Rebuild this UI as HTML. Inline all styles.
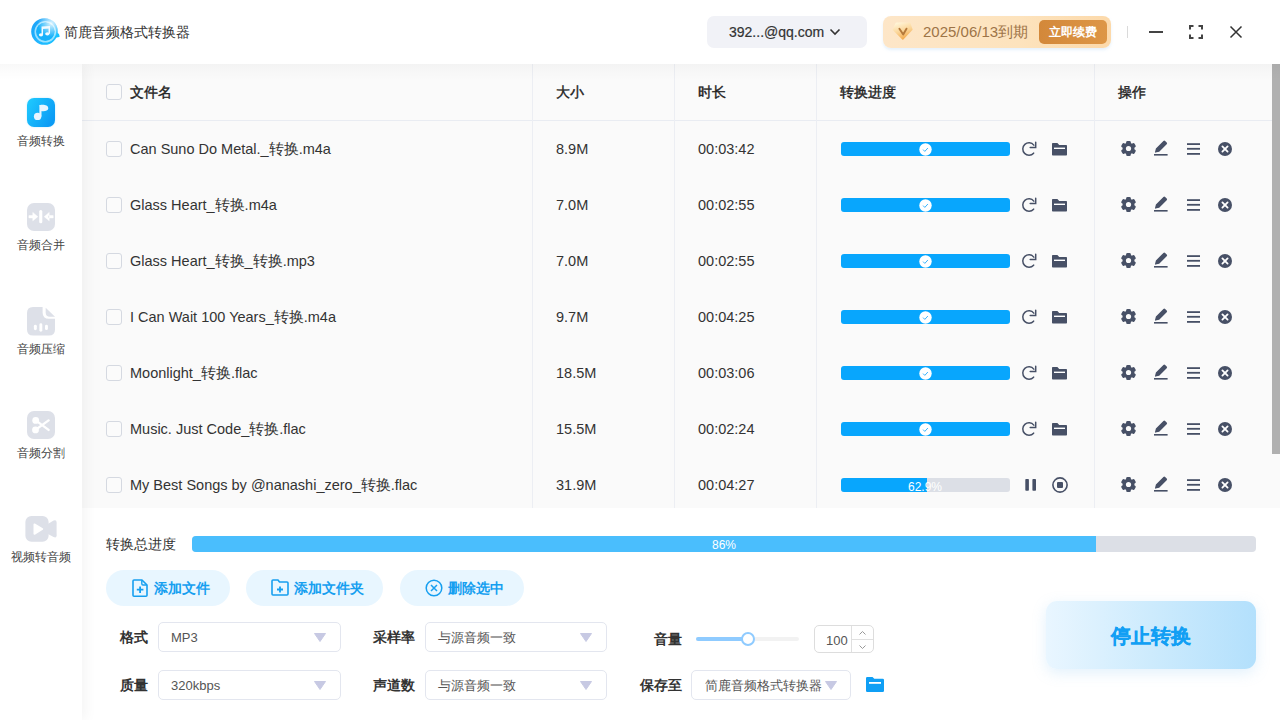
<!DOCTYPE html>
<html><head><meta charset="utf-8">
<style>
*{box-sizing:border-box;margin:0;padding:0}
html,body{width:1280px;height:720px;overflow:hidden;background:#fff}
body{position:relative;font-family:"Liberation Sans",sans-serif;color:#333;font-size:14px}
.a{position:absolute}
.t{position:absolute;white-space:nowrap;line-height:20px}
#header{left:0;top:0;width:1280px;height:64px;background:#fff;z-index:3}
#side{left:0;top:64px;width:82px;height:656px;background:#fff;z-index:2;box-shadow:4px 0 12px rgba(0,0,0,0.045)}
#table{left:82px;top:64px;width:1198px;height:444px;background:#fafafa;overflow:hidden}
#topshade{left:0;top:64px;width:1280px;height:16px;background:linear-gradient(rgba(0,0,0,0.028),rgba(0,0,0,0.01) 50%,rgba(0,0,0,0));z-index:4}
.cb{position:absolute;width:16px;height:16px;border:1px solid #d5d9e1;border-radius:3px;background:#fbfbfb}
.vl{position:absolute;top:0;width:1px;height:444px;background:#eceef3}
.th{color:#222;-webkit-text-stroke:0.4px #222}
.bar{position:absolute;left:759px;width:169px;height:14px;border-radius:3px;background:#08a6fd}
.ops svg{position:absolute}
</style></head><body>

<!-- HEADER -->
<div id="header" class="a">
  <svg class="a" style="left:28px;top:14px" width="36" height="36" viewBox="0 0 36 36">
    <defs><linearGradient id="lg1" x1="0" y1="0" x2="1" y2="1"><stop offset="0" stop-color="#1b9ff7"/><stop offset="0.55" stop-color="#22b5ff"/><stop offset="1" stop-color="#17c4ff"/></linearGradient>
    <radialGradient id="lg2" cx="0.75" cy="0.2" r="0.5"><stop offset="0" stop-color="#fff" stop-opacity="0.85"/><stop offset="1" stop-color="#fff" stop-opacity="0"/></radialGradient>
    <filter id="bl1"><feGaussianBlur stdDeviation="0.5"/></filter></defs>
    <g filter="url(#bl1)">
    <circle cx="16.5" cy="17.5" r="13.3" fill="url(#lg1)"/>
    <path d="M27 17.5c2.5 0.5 4.5 2.5 4.7 5.2-1.5 0.8-3.5 1-5.5 0.5z" fill="#12c0ff"/>
    <circle cx="17.3" cy="17.8" r="10" fill="none" stroke="#b8ecff" stroke-width="1.6" opacity="0.8"/>
    <circle cx="17.5" cy="17.5" r="9" fill="#15b1fb"/>
    <circle cx="16.5" cy="17.5" r="13.5" fill="url(#lg2)"/>
    </g>
    <ellipse cx="13" cy="20.8" rx="2.1" ry="1.6" fill="#f2faff"/>
    <ellipse cx="19.3" cy="19.8" rx="2.1" ry="1.6" fill="#f2faff"/>
    <path d="M14.3 20.8V13.3L21.3 12.7V19.8" fill="none" stroke="#f2faff" stroke-width="1.5"/>
    <path d="M14.3 13.3L21.3 12.7V14.4L14.3 15z" fill="#f2faff"/>
  </svg>
  <div class="t" style="left:64px;top:22px;font-size:14px;color:#333">简鹿音频格式转换器</div>

  <div class="a" style="left:707px;top:16px;width:160px;height:32px;border-radius:7px;background:#f1f2f7"></div>
  <div class="t" style="left:729px;top:22px;font-size:14px;color:#333;-webkit-text-stroke:0.2px #333">392...@qq.com</div>
  <svg class="a" style="left:829px;top:27px" width="12" height="10" viewBox="0 0 12 10"><path d="M1.5 2.5L6 7l4.5-4.5" fill="none" stroke="#333" stroke-width="1.6"/></svg>

  <div class="a" style="left:883px;top:16px;width:228px;height:32px;border-radius:8px;background:linear-gradient(90deg,#fde6c8,#fde3bd 60%,#fcd9aa);box-shadow:0 2px 3px rgba(180,215,245,0.35)"></div>
  <svg class="a" style="left:892px;top:22px" width="22" height="19" viewBox="0 0 22 19">
    <defs><linearGradient id="dg" x1="0.2" y1="0" x2="0.6" y2="1"><stop offset="0" stop-color="#fff4d6"/><stop offset="0.5" stop-color="#fbd69a"/><stop offset="1" stop-color="#f3ab4f"/></linearGradient>
    <filter id="bl2"><feGaussianBlur stdDeviation="0.35"/></filter></defs>
    <path d="M4.3 1.4H17.7L19.8 7.5 10.8 16.9 1.4 7.5z" fill="url(#dg)" stroke="url(#dg)" stroke-width="1.6" stroke-linejoin="round" filter="url(#bl2)"/>
    <path d="M7.4 6.7l3.8 5.8 3.3-5.8" fill="none" stroke="#b57a3c" stroke-width="1.9" stroke-linecap="round" stroke-linejoin="round"/>
  </svg>
  <div class="t" style="left:923px;top:22px;font-size:15px;color:#9d7447">2025/06/13到期</div>
  <div class="a" style="left:1039px;top:20px;width:68px;height:24px;border-radius:5px;background:linear-gradient(90deg,#d3883a,#dd9646)"></div>
  <div class="t" style="left:1049px;top:22px;font-size:12px;font-weight:bold;color:#fff">立即续费</div>

  <div class="a" style="left:1127px;top:26px;width:1px;height:12px;background:#dadada"></div>
  <div class="a" style="left:1149px;top:31px;width:14px;height:2px;background:#444"></div>
  <svg class="a" style="left:1189px;top:25px" width="14" height="14" viewBox="0 0 14 14" fill="none" stroke="#444" stroke-width="2">
    <path d="M1 4.5V1h3.5M9.5 1H13v3.5M13 9.5V13H9.5M4.5 13H1V9.5"/>
  </svg>
  <svg class="a" style="left:1229px;top:25px" width="14" height="14" viewBox="0 0 14 14" fill="none" stroke="#333" stroke-width="1.5">
    <path d="M1.5 1.5l11 11M12.5 1.5l-11 11"/>
  </svg>
</div>
<div id="topshade" class="a"></div>

<!-- SIDEBAR -->
<div id="side" class="a">
  <svg class="a" style="left:25px;top:32px" width="32" height="33" viewBox="-2 -2 32 33">
    <defs><linearGradient id="ag" x1="0" y1="0" x2="1" y2="0.6"><stop offset="0" stop-color="#20ccff"/><stop offset="1" stop-color="#0b9bf5"/></linearGradient>
    <filter id="glow" x="-20%" y="-20%" width="140%" height="140%"><feGaussianBlur stdDeviation="0.8"/></filter></defs>
    <rect x="0" y="0" width="28" height="29" rx="7.5" fill="#8fdcff" opacity="0.5" filter="url(#glow)"/>
    <rect x="0" y="0" width="28" height="29" rx="7" fill="url(#ag)"/>
    <circle cx="10.6" cy="18.4" r="3.7" fill="#e8f5ff"/>
    <rect x="12.4" y="7" width="2.1" height="11.5" fill="#e8f5ff"/>
    <path d="M12.6 7.2C16 6.2 21.2 6.8 21.2 10.2 21.2 13 17.2 13.6 14 13z" fill="#e8f5ff"/>
  </svg>
  <div class="t" style="left:17px;top:67px;width:48px;font-size:12px;color:#444;text-align:center">音频转换</div>

  <svg class="a" style="left:27px;top:139px" width="28" height="28" viewBox="0 0 28 28">
    <rect width="28" height="28" rx="7" fill="#dde0e8"/>
    <rect x="12.2" y="7" width="3.1" height="13.2" rx="1.5" fill="#fff"/>
    <path d="M1.9 12.6h5v2.3h-5z M5.8 9.4l5 4.3-5 4.1z M21 12.6h5.2v2.3H21z M22.2 9.4l-5 4.3 5 4.1z" fill="#fff" stroke="#fff" stroke-width="0.5" stroke-linejoin="round"/>
  </svg>
  <div class="t" style="left:17px;top:171px;width:48px;font-size:12px;color:#444;text-align:center">音频合并</div>

  <svg class="a" style="left:27px;top:243px" width="28" height="29" viewBox="0 0 28 29">
    <path d="M6 0H15.6V5.5Q15.6 11.8 22 11.8H28V22.5Q28 28.5 22 28.5H6Q0 28.5 0 22.5V6Q0 0 6 0Z" fill="#dde0e8"/>
    <path d="M18.7 0.8L28 9.8H23Q18.7 9.8 18.7 5.5Z" fill="#dde0e8"/>
    <rect x="6.9" y="17.8" width="2.9" height="5.5" rx="1.45" fill="#fff"/>
    <rect x="12.4" y="16.2" width="2.9" height="8.5" rx="1.45" fill="#fff"/>
    <rect x="18" y="17.8" width="2.9" height="5.3" rx="1.45" fill="#fff"/>
  </svg>
  <div class="t" style="left:17px;top:275px;width:48px;font-size:12px;color:#444;text-align:center">音频压缩</div>

  <svg class="a" style="left:27px;top:347px" width="28" height="28" viewBox="0 0 28 28">
    <rect width="28" height="28" rx="7" fill="#dde0e8"/>
    <path d="M8.7 9.4L21.6 18.9M8.5 18.9L21.6 9.4" stroke="#fff" stroke-width="2.4" stroke-linecap="round"/>
    <circle cx="8.7" cy="9.4" r="3.4" fill="#fff"/><circle cx="8.5" cy="18.9" r="3.4" fill="#fff"/>
  </svg>
  <div class="t" style="left:17px;top:379px;width:48px;font-size:12px;color:#444;text-align:center">音频分割</div>

  <svg class="a" style="left:25px;top:451px" width="32" height="28" viewBox="0 0 32 28">
    <rect x="0.4" y="0.9" width="23.2" height="25.9" rx="6" fill="#dde0e8"/>
    <path d="M22 9.5L28.6 5.6Q31.6 4.4 31.6 7.5V20.2Q31.6 23.3 28.6 22L22 18.5z" fill="#dde0e8"/>
    <path d="M9.4 9.3L17.3 14.1 9.4 18.9z" fill="#fff" stroke="#fff" stroke-width="1.8" stroke-linejoin="round"/>
  </svg>
  <div class="t" style="left:8px;top:483px;width:66px;font-size:12px;color:#444;text-align:center">视频转音频</div>
</div>

<!-- TABLE -->
<div id="table" class="a">
<div class="a" style="left:0;top:56px;width:1190px;height:1px;background:#e9ecf2"></div>
<div class="vl" style="left:450px"></div>
<div class="vl" style="left:592px"></div>
<div class="vl" style="left:734px"></div>
<div class="vl" style="left:1012px"></div>
<div class="cb" style="left:24px;top:20px"></div>
<div class="t th" style="left:48px;top:18px">文件名</div>
<div class="t th" style="left:474px;top:18px">大小</div>
<div class="t th" style="left:616px;top:18px">时长</div>
<div class="t th" style="left:758px;top:18px">转换进度</div>
<div class="t th" style="left:1036px;top:18px">操作</div>
<div class="cb" style="left:24px;top:77px"></div>
<div class="t" style="left:48px;top:75px;font-size:14.5px">Can Suno Do Metal._转换.m4a</div>
<div class="t" style="left:474px;top:75px;font-size:14.5px">8.9M</div>
<div class="t" style="left:616px;top:75px;font-size:14.5px">00:03:42</div>
<div class="bar" style="top:78px"></div>
<svg class="a" style="left:837px;top:79px" width="13" height="13" viewBox="0 0 13 13"><circle cx="6.5" cy="6.5" r="6.2" fill="#fff"/><path d="M4.1 6.6l1.7 1.8 3.1-3.4" fill="none" stroke="#3cb4fd" stroke-width="1"/></svg>
<svg class="a" style="left:939px;top:77px" width="17" height="16" viewBox="0 0 17 16"><path d="M12.82 4.1A6.2 6.2 0 1 0 12.6 12.15" fill="none" stroke="#475066" stroke-width="1.5" stroke-linecap="round"/><path d="M14.7 1.2V6.4H9.2" fill="none" stroke="#475066" stroke-width="1.5" stroke-linecap="round"/></svg>
<svg class="a" style="left:970px;top:79px" width="15" height="13" viewBox="0 0 15 13"><path d="M0 0.8A0.8 0.8 0 0 1 0.8 0H5.4L7.2 2H14.2A0.8 0.8 0 0 1 15 2.8V11.7A0.8 0.8 0 0 1 14.2 12.5H0.8A0.8 0.8 0 0 1 0 11.7z" fill="#475066"/><rect x="2" y="4.6" width="11" height="1.4" fill="#fff"/></svg>
<svg class="a" style="left:1038px;top:76px" width="17" height="17" viewBox="0 0 17 17"><g transform="translate(8.5 8.5)"><g fill="#475066"><rect x="-2.3" y="-7.6" width="4.6" height="15.2" rx="1.3"/><rect x="-2.3" y="-7.6" width="4.6" height="15.2" rx="1.3" transform="rotate(60)"/><rect x="-2.3" y="-7.6" width="4.6" height="15.2" rx="1.3" transform="rotate(120)"/><circle r="5.9"/></g><circle r="2.6" fill="#fafafa"/></g></svg>
<svg class="a" style="left:1071px;top:76px" width="15" height="16" viewBox="0 0 15 16"><path fill="#475066" d="M10.4 0.9a1.2 1.2 0 0 1 1.7 0l1.6 1.6a1.2 1.2 0 0 1 0 1.7L6.2 11.7 2.6 12.6a0.5 0.5 0 0 1-0.6-0.6L2.9 8.4z"/><rect x="1" y="14" width="13.6" height="1.6" fill="#475066"/></svg>
<svg class="a" style="left:1105px;top:78px" width="13" height="13" viewBox="0 0 13 13"><rect x="0" y="1.2" width="13" height="1.8" fill="#475066"/><rect x="0" y="5.9" width="13" height="1.8" fill="#475066"/><rect x="0" y="11" width="13" height="1.8" fill="#475066"/></svg>
<svg class="a" style="left:1136px;top:78px" width="14" height="14" viewBox="0 0 14 14"><circle cx="7" cy="7" r="7" fill="#475066"/><path d="M4.4 4.4L9.6 9.6" stroke="#fff" stroke-width="1.8" stroke-linecap="round" fill="none"/><path d="M9.6 4.4L4.4 9.6" stroke="#fff" stroke-width="1.8" stroke-linecap="round" fill="none"/></svg>
<div class="cb" style="left:24px;top:133px"></div>
<div class="t" style="left:48px;top:131px;font-size:14.5px">Glass Heart_转换.m4a</div>
<div class="t" style="left:474px;top:131px;font-size:14.5px">7.0M</div>
<div class="t" style="left:616px;top:131px;font-size:14.5px">00:02:55</div>
<div class="bar" style="top:134px"></div>
<svg class="a" style="left:837px;top:135px" width="13" height="13" viewBox="0 0 13 13"><circle cx="6.5" cy="6.5" r="6.2" fill="#fff"/><path d="M4.1 6.6l1.7 1.8 3.1-3.4" fill="none" stroke="#3cb4fd" stroke-width="1"/></svg>
<svg class="a" style="left:939px;top:133px" width="17" height="16" viewBox="0 0 17 16"><path d="M12.82 4.1A6.2 6.2 0 1 0 12.6 12.15" fill="none" stroke="#475066" stroke-width="1.5" stroke-linecap="round"/><path d="M14.7 1.2V6.4H9.2" fill="none" stroke="#475066" stroke-width="1.5" stroke-linecap="round"/></svg>
<svg class="a" style="left:970px;top:135px" width="15" height="13" viewBox="0 0 15 13"><path d="M0 0.8A0.8 0.8 0 0 1 0.8 0H5.4L7.2 2H14.2A0.8 0.8 0 0 1 15 2.8V11.7A0.8 0.8 0 0 1 14.2 12.5H0.8A0.8 0.8 0 0 1 0 11.7z" fill="#475066"/><rect x="2" y="4.6" width="11" height="1.4" fill="#fff"/></svg>
<svg class="a" style="left:1038px;top:132px" width="17" height="17" viewBox="0 0 17 17"><g transform="translate(8.5 8.5)"><g fill="#475066"><rect x="-2.3" y="-7.6" width="4.6" height="15.2" rx="1.3"/><rect x="-2.3" y="-7.6" width="4.6" height="15.2" rx="1.3" transform="rotate(60)"/><rect x="-2.3" y="-7.6" width="4.6" height="15.2" rx="1.3" transform="rotate(120)"/><circle r="5.9"/></g><circle r="2.6" fill="#fafafa"/></g></svg>
<svg class="a" style="left:1071px;top:132px" width="15" height="16" viewBox="0 0 15 16"><path fill="#475066" d="M10.4 0.9a1.2 1.2 0 0 1 1.7 0l1.6 1.6a1.2 1.2 0 0 1 0 1.7L6.2 11.7 2.6 12.6a0.5 0.5 0 0 1-0.6-0.6L2.9 8.4z"/><rect x="1" y="14" width="13.6" height="1.6" fill="#475066"/></svg>
<svg class="a" style="left:1105px;top:134px" width="13" height="13" viewBox="0 0 13 13"><rect x="0" y="1.2" width="13" height="1.8" fill="#475066"/><rect x="0" y="5.9" width="13" height="1.8" fill="#475066"/><rect x="0" y="11" width="13" height="1.8" fill="#475066"/></svg>
<svg class="a" style="left:1136px;top:134px" width="14" height="14" viewBox="0 0 14 14"><circle cx="7" cy="7" r="7" fill="#475066"/><path d="M4.4 4.4L9.6 9.6" stroke="#fff" stroke-width="1.8" stroke-linecap="round" fill="none"/><path d="M9.6 4.4L4.4 9.6" stroke="#fff" stroke-width="1.8" stroke-linecap="round" fill="none"/></svg>
<div class="cb" style="left:24px;top:189px"></div>
<div class="t" style="left:48px;top:187px;font-size:14.5px">Glass Heart_转换_转换.mp3</div>
<div class="t" style="left:474px;top:187px;font-size:14.5px">7.0M</div>
<div class="t" style="left:616px;top:187px;font-size:14.5px">00:02:55</div>
<div class="bar" style="top:190px"></div>
<svg class="a" style="left:837px;top:191px" width="13" height="13" viewBox="0 0 13 13"><circle cx="6.5" cy="6.5" r="6.2" fill="#fff"/><path d="M4.1 6.6l1.7 1.8 3.1-3.4" fill="none" stroke="#3cb4fd" stroke-width="1"/></svg>
<svg class="a" style="left:939px;top:189px" width="17" height="16" viewBox="0 0 17 16"><path d="M12.82 4.1A6.2 6.2 0 1 0 12.6 12.15" fill="none" stroke="#475066" stroke-width="1.5" stroke-linecap="round"/><path d="M14.7 1.2V6.4H9.2" fill="none" stroke="#475066" stroke-width="1.5" stroke-linecap="round"/></svg>
<svg class="a" style="left:970px;top:191px" width="15" height="13" viewBox="0 0 15 13"><path d="M0 0.8A0.8 0.8 0 0 1 0.8 0H5.4L7.2 2H14.2A0.8 0.8 0 0 1 15 2.8V11.7A0.8 0.8 0 0 1 14.2 12.5H0.8A0.8 0.8 0 0 1 0 11.7z" fill="#475066"/><rect x="2" y="4.6" width="11" height="1.4" fill="#fff"/></svg>
<svg class="a" style="left:1038px;top:188px" width="17" height="17" viewBox="0 0 17 17"><g transform="translate(8.5 8.5)"><g fill="#475066"><rect x="-2.3" y="-7.6" width="4.6" height="15.2" rx="1.3"/><rect x="-2.3" y="-7.6" width="4.6" height="15.2" rx="1.3" transform="rotate(60)"/><rect x="-2.3" y="-7.6" width="4.6" height="15.2" rx="1.3" transform="rotate(120)"/><circle r="5.9"/></g><circle r="2.6" fill="#fafafa"/></g></svg>
<svg class="a" style="left:1071px;top:188px" width="15" height="16" viewBox="0 0 15 16"><path fill="#475066" d="M10.4 0.9a1.2 1.2 0 0 1 1.7 0l1.6 1.6a1.2 1.2 0 0 1 0 1.7L6.2 11.7 2.6 12.6a0.5 0.5 0 0 1-0.6-0.6L2.9 8.4z"/><rect x="1" y="14" width="13.6" height="1.6" fill="#475066"/></svg>
<svg class="a" style="left:1105px;top:190px" width="13" height="13" viewBox="0 0 13 13"><rect x="0" y="1.2" width="13" height="1.8" fill="#475066"/><rect x="0" y="5.9" width="13" height="1.8" fill="#475066"/><rect x="0" y="11" width="13" height="1.8" fill="#475066"/></svg>
<svg class="a" style="left:1136px;top:190px" width="14" height="14" viewBox="0 0 14 14"><circle cx="7" cy="7" r="7" fill="#475066"/><path d="M4.4 4.4L9.6 9.6" stroke="#fff" stroke-width="1.8" stroke-linecap="round" fill="none"/><path d="M9.6 4.4L4.4 9.6" stroke="#fff" stroke-width="1.8" stroke-linecap="round" fill="none"/></svg>
<div class="cb" style="left:24px;top:245px"></div>
<div class="t" style="left:48px;top:243px;font-size:14.5px">I Can Wait 100 Years_转换.m4a</div>
<div class="t" style="left:474px;top:243px;font-size:14.5px">9.7M</div>
<div class="t" style="left:616px;top:243px;font-size:14.5px">00:04:25</div>
<div class="bar" style="top:246px"></div>
<svg class="a" style="left:837px;top:247px" width="13" height="13" viewBox="0 0 13 13"><circle cx="6.5" cy="6.5" r="6.2" fill="#fff"/><path d="M4.1 6.6l1.7 1.8 3.1-3.4" fill="none" stroke="#3cb4fd" stroke-width="1"/></svg>
<svg class="a" style="left:939px;top:245px" width="17" height="16" viewBox="0 0 17 16"><path d="M12.82 4.1A6.2 6.2 0 1 0 12.6 12.15" fill="none" stroke="#475066" stroke-width="1.5" stroke-linecap="round"/><path d="M14.7 1.2V6.4H9.2" fill="none" stroke="#475066" stroke-width="1.5" stroke-linecap="round"/></svg>
<svg class="a" style="left:970px;top:247px" width="15" height="13" viewBox="0 0 15 13"><path d="M0 0.8A0.8 0.8 0 0 1 0.8 0H5.4L7.2 2H14.2A0.8 0.8 0 0 1 15 2.8V11.7A0.8 0.8 0 0 1 14.2 12.5H0.8A0.8 0.8 0 0 1 0 11.7z" fill="#475066"/><rect x="2" y="4.6" width="11" height="1.4" fill="#fff"/></svg>
<svg class="a" style="left:1038px;top:244px" width="17" height="17" viewBox="0 0 17 17"><g transform="translate(8.5 8.5)"><g fill="#475066"><rect x="-2.3" y="-7.6" width="4.6" height="15.2" rx="1.3"/><rect x="-2.3" y="-7.6" width="4.6" height="15.2" rx="1.3" transform="rotate(60)"/><rect x="-2.3" y="-7.6" width="4.6" height="15.2" rx="1.3" transform="rotate(120)"/><circle r="5.9"/></g><circle r="2.6" fill="#fafafa"/></g></svg>
<svg class="a" style="left:1071px;top:244px" width="15" height="16" viewBox="0 0 15 16"><path fill="#475066" d="M10.4 0.9a1.2 1.2 0 0 1 1.7 0l1.6 1.6a1.2 1.2 0 0 1 0 1.7L6.2 11.7 2.6 12.6a0.5 0.5 0 0 1-0.6-0.6L2.9 8.4z"/><rect x="1" y="14" width="13.6" height="1.6" fill="#475066"/></svg>
<svg class="a" style="left:1105px;top:246px" width="13" height="13" viewBox="0 0 13 13"><rect x="0" y="1.2" width="13" height="1.8" fill="#475066"/><rect x="0" y="5.9" width="13" height="1.8" fill="#475066"/><rect x="0" y="11" width="13" height="1.8" fill="#475066"/></svg>
<svg class="a" style="left:1136px;top:246px" width="14" height="14" viewBox="0 0 14 14"><circle cx="7" cy="7" r="7" fill="#475066"/><path d="M4.4 4.4L9.6 9.6" stroke="#fff" stroke-width="1.8" stroke-linecap="round" fill="none"/><path d="M9.6 4.4L4.4 9.6" stroke="#fff" stroke-width="1.8" stroke-linecap="round" fill="none"/></svg>
<div class="cb" style="left:24px;top:301px"></div>
<div class="t" style="left:48px;top:299px;font-size:14.5px">Moonlight_转换.flac</div>
<div class="t" style="left:474px;top:299px;font-size:14.5px">18.5M</div>
<div class="t" style="left:616px;top:299px;font-size:14.5px">00:03:06</div>
<div class="bar" style="top:302px"></div>
<svg class="a" style="left:837px;top:303px" width="13" height="13" viewBox="0 0 13 13"><circle cx="6.5" cy="6.5" r="6.2" fill="#fff"/><path d="M4.1 6.6l1.7 1.8 3.1-3.4" fill="none" stroke="#3cb4fd" stroke-width="1"/></svg>
<svg class="a" style="left:939px;top:301px" width="17" height="16" viewBox="0 0 17 16"><path d="M12.82 4.1A6.2 6.2 0 1 0 12.6 12.15" fill="none" stroke="#475066" stroke-width="1.5" stroke-linecap="round"/><path d="M14.7 1.2V6.4H9.2" fill="none" stroke="#475066" stroke-width="1.5" stroke-linecap="round"/></svg>
<svg class="a" style="left:970px;top:303px" width="15" height="13" viewBox="0 0 15 13"><path d="M0 0.8A0.8 0.8 0 0 1 0.8 0H5.4L7.2 2H14.2A0.8 0.8 0 0 1 15 2.8V11.7A0.8 0.8 0 0 1 14.2 12.5H0.8A0.8 0.8 0 0 1 0 11.7z" fill="#475066"/><rect x="2" y="4.6" width="11" height="1.4" fill="#fff"/></svg>
<svg class="a" style="left:1038px;top:300px" width="17" height="17" viewBox="0 0 17 17"><g transform="translate(8.5 8.5)"><g fill="#475066"><rect x="-2.3" y="-7.6" width="4.6" height="15.2" rx="1.3"/><rect x="-2.3" y="-7.6" width="4.6" height="15.2" rx="1.3" transform="rotate(60)"/><rect x="-2.3" y="-7.6" width="4.6" height="15.2" rx="1.3" transform="rotate(120)"/><circle r="5.9"/></g><circle r="2.6" fill="#fafafa"/></g></svg>
<svg class="a" style="left:1071px;top:300px" width="15" height="16" viewBox="0 0 15 16"><path fill="#475066" d="M10.4 0.9a1.2 1.2 0 0 1 1.7 0l1.6 1.6a1.2 1.2 0 0 1 0 1.7L6.2 11.7 2.6 12.6a0.5 0.5 0 0 1-0.6-0.6L2.9 8.4z"/><rect x="1" y="14" width="13.6" height="1.6" fill="#475066"/></svg>
<svg class="a" style="left:1105px;top:302px" width="13" height="13" viewBox="0 0 13 13"><rect x="0" y="1.2" width="13" height="1.8" fill="#475066"/><rect x="0" y="5.9" width="13" height="1.8" fill="#475066"/><rect x="0" y="11" width="13" height="1.8" fill="#475066"/></svg>
<svg class="a" style="left:1136px;top:302px" width="14" height="14" viewBox="0 0 14 14"><circle cx="7" cy="7" r="7" fill="#475066"/><path d="M4.4 4.4L9.6 9.6" stroke="#fff" stroke-width="1.8" stroke-linecap="round" fill="none"/><path d="M9.6 4.4L4.4 9.6" stroke="#fff" stroke-width="1.8" stroke-linecap="round" fill="none"/></svg>
<div class="cb" style="left:24px;top:357px"></div>
<div class="t" style="left:48px;top:355px;font-size:14.5px">Music. Just Code_转换.flac</div>
<div class="t" style="left:474px;top:355px;font-size:14.5px">15.5M</div>
<div class="t" style="left:616px;top:355px;font-size:14.5px">00:02:24</div>
<div class="bar" style="top:358px"></div>
<svg class="a" style="left:837px;top:359px" width="13" height="13" viewBox="0 0 13 13"><circle cx="6.5" cy="6.5" r="6.2" fill="#fff"/><path d="M4.1 6.6l1.7 1.8 3.1-3.4" fill="none" stroke="#3cb4fd" stroke-width="1"/></svg>
<svg class="a" style="left:939px;top:357px" width="17" height="16" viewBox="0 0 17 16"><path d="M12.82 4.1A6.2 6.2 0 1 0 12.6 12.15" fill="none" stroke="#475066" stroke-width="1.5" stroke-linecap="round"/><path d="M14.7 1.2V6.4H9.2" fill="none" stroke="#475066" stroke-width="1.5" stroke-linecap="round"/></svg>
<svg class="a" style="left:970px;top:359px" width="15" height="13" viewBox="0 0 15 13"><path d="M0 0.8A0.8 0.8 0 0 1 0.8 0H5.4L7.2 2H14.2A0.8 0.8 0 0 1 15 2.8V11.7A0.8 0.8 0 0 1 14.2 12.5H0.8A0.8 0.8 0 0 1 0 11.7z" fill="#475066"/><rect x="2" y="4.6" width="11" height="1.4" fill="#fff"/></svg>
<svg class="a" style="left:1038px;top:356px" width="17" height="17" viewBox="0 0 17 17"><g transform="translate(8.5 8.5)"><g fill="#475066"><rect x="-2.3" y="-7.6" width="4.6" height="15.2" rx="1.3"/><rect x="-2.3" y="-7.6" width="4.6" height="15.2" rx="1.3" transform="rotate(60)"/><rect x="-2.3" y="-7.6" width="4.6" height="15.2" rx="1.3" transform="rotate(120)"/><circle r="5.9"/></g><circle r="2.6" fill="#fafafa"/></g></svg>
<svg class="a" style="left:1071px;top:356px" width="15" height="16" viewBox="0 0 15 16"><path fill="#475066" d="M10.4 0.9a1.2 1.2 0 0 1 1.7 0l1.6 1.6a1.2 1.2 0 0 1 0 1.7L6.2 11.7 2.6 12.6a0.5 0.5 0 0 1-0.6-0.6L2.9 8.4z"/><rect x="1" y="14" width="13.6" height="1.6" fill="#475066"/></svg>
<svg class="a" style="left:1105px;top:358px" width="13" height="13" viewBox="0 0 13 13"><rect x="0" y="1.2" width="13" height="1.8" fill="#475066"/><rect x="0" y="5.9" width="13" height="1.8" fill="#475066"/><rect x="0" y="11" width="13" height="1.8" fill="#475066"/></svg>
<svg class="a" style="left:1136px;top:358px" width="14" height="14" viewBox="0 0 14 14"><circle cx="7" cy="7" r="7" fill="#475066"/><path d="M4.4 4.4L9.6 9.6" stroke="#fff" stroke-width="1.8" stroke-linecap="round" fill="none"/><path d="M9.6 4.4L4.4 9.6" stroke="#fff" stroke-width="1.8" stroke-linecap="round" fill="none"/></svg>
<div class="cb" style="left:24px;top:413px"></div>
<div class="t" style="left:48px;top:411px;font-size:14.5px">My Best Songs by @nanashi_zero_转换.flac</div>
<div class="t" style="left:474px;top:411px;font-size:14.5px">31.9M</div>
<div class="t" style="left:616px;top:411px;font-size:14.5px">00:04:27</div>
<div class="bar" style="top:414px;background:#dcdfe6;overflow:hidden"><div style="width:86px;height:14px;background:#08a6fd"></div></div>
<div class="t" style="left:826px;top:414px;font-size:12px;color:#fff;line-height:18px">62.9%</div>
<svg class="a" style="left:943px;top:414px" width="12" height="13" viewBox="0 0 12 13"><rect x="0.3" y="1" width="3.6" height="11.8" rx="0.8" fill="#475066"/><rect x="7.4" y="1" width="3.6" height="11.8" rx="0.8" fill="#475066"/></svg>
<svg class="a" style="left:970px;top:413px" width="16" height="16" viewBox="0 0 16 16"><circle cx="8" cy="8" r="7.1" fill="none" stroke="#475066" stroke-width="1.6"/><rect x="5" y="5" width="6" height="6" rx="1" fill="#475066"/></svg>
<svg class="a" style="left:1038px;top:412px" width="17" height="17" viewBox="0 0 17 17"><g transform="translate(8.5 8.5)"><g fill="#475066"><rect x="-2.3" y="-7.6" width="4.6" height="15.2" rx="1.3"/><rect x="-2.3" y="-7.6" width="4.6" height="15.2" rx="1.3" transform="rotate(60)"/><rect x="-2.3" y="-7.6" width="4.6" height="15.2" rx="1.3" transform="rotate(120)"/><circle r="5.9"/></g><circle r="2.6" fill="#fafafa"/></g></svg>
<svg class="a" style="left:1071px;top:412px" width="15" height="16" viewBox="0 0 15 16"><path fill="#475066" d="M10.4 0.9a1.2 1.2 0 0 1 1.7 0l1.6 1.6a1.2 1.2 0 0 1 0 1.7L6.2 11.7 2.6 12.6a0.5 0.5 0 0 1-0.6-0.6L2.9 8.4z"/><rect x="1" y="14" width="13.6" height="1.6" fill="#475066"/></svg>
<svg class="a" style="left:1105px;top:414px" width="13" height="13" viewBox="0 0 13 13"><rect x="0" y="1.2" width="13" height="1.8" fill="#475066"/><rect x="0" y="5.9" width="13" height="1.8" fill="#475066"/><rect x="0" y="11" width="13" height="1.8" fill="#475066"/></svg>
<svg class="a" style="left:1136px;top:414px" width="14" height="14" viewBox="0 0 14 14"><circle cx="7" cy="7" r="7" fill="#475066"/><path d="M4.4 4.4L9.6 9.6" stroke="#fff" stroke-width="1.8" stroke-linecap="round" fill="none"/><path d="M9.6 4.4L4.4 9.6" stroke="#fff" stroke-width="1.8" stroke-linecap="round" fill="none"/></svg>
<div class="a" style="left:1190px;top:0;width:8px;height:390px;background:#b0b0b0"></div>
</div>

<!-- BOTTOM -->
<div class="t" style="left:106px;top:534px;font-size:14px;color:#333">转换总进度</div>
<div class="a" style="left:192px;top:536px;width:1064px;height:16px;border-radius:4px;background:#dcdfe6;overflow:hidden"><div style="width:904px;height:16px;background:#4abefd"></div></div>
<div class="t" style="left:712px;top:536px;font-size:12px;color:#fff;line-height:18px">86%</div>
<div class="a" style="left:106px;top:570px;width:124px;height:36px;border-radius:18px;background:#e8f6ff"></div>
<svg class="a" style="left:131px;top:579px" width="18" height="18" viewBox="0 0 18 18"><path d="M3 1h8l5 5v10.2a1 1 0 0 1-1 1H3a1 1 0 0 1-1-1V2a1 1 0 0 1 1-1z" fill="none" stroke="#169ff0" stroke-width="1.6" stroke-linejoin="round"/><path d="M10.8 1.2v3.6a1.2 1.2 0 0 0 1.2 1.2H15.8" fill="none" stroke="#169ff0" stroke-width="1.4"/><path d="M9.1 7.4v6.6M5.8 10.7h6.6" stroke="#169ff0" stroke-width="1.8"/></svg>
<div class="t" style="left:154px;top:578px;font-size:14px;font-weight:bold;color:#169ff0">添加文件</div>
<div class="a" style="left:246px;top:570px;width:137px;height:36px;border-radius:18px;background:#e8f6ff"></div>
<svg class="a" style="left:271px;top:579px" width="18" height="17" viewBox="0 0 18 17"><path d="M1 2a1 1 0 0 1 1-1h5l1.5 2H16a1 1 0 0 1 1 1v11a1 1 0 0 1-1 1H2a1 1 0 0 1-1-1z" fill="none" stroke="#169ff0" stroke-width="1.6" stroke-linejoin="round"/><path d="M9 7.5v6M6 10.5h6" stroke="#169ff0" stroke-width="1.8"/></svg>
<div class="t" style="left:294px;top:578px;font-size:14px;font-weight:bold;color:#169ff0">添加文件夹</div>
<div class="a" style="left:400px;top:570px;width:124px;height:36px;border-radius:18px;background:#e8f6ff"></div>
<svg class="a" style="left:425px;top:579px" width="18" height="18" viewBox="0 0 18 18"><circle cx="9" cy="9" r="7.8" fill="none" stroke="#169ff0" stroke-width="1.5"/><path d="M6 6l6 6M12 6l-6 6" stroke="#169ff0" stroke-width="1.5"/></svg>
<div class="t" style="left:448px;top:578px;font-size:14px;font-weight:bold;color:#169ff0">删除选中</div>
<div class="t" style="left:120px;top:627px;font-size:14px;font-weight:bold;color:#333">格式</div>
<div class="a" style="left:158px;top:622px;width:183px;height:30px;border:1px solid #e3e6ef;border-radius:5px;background:#fff"></div>
<div class="t" style="left:171px;top:628px;font-size:13px;color:#555">MP3</div>
<svg class="a" style="left:314px;top:633px" width="12" height="9" viewBox="0 0 12 9"><path d="M0.5 0.5h11L6 8.5z" fill="#c7c9e3" stroke="#c7c9e3" stroke-width="1" stroke-linejoin="round"/></svg>
<div class="t" style="left:120px;top:675px;font-size:14px;font-weight:bold;color:#333">质量</div>
<div class="a" style="left:158px;top:670px;width:183px;height:30px;border:1px solid #e3e6ef;border-radius:5px;background:#fff"></div>
<div class="t" style="left:171px;top:676px;font-size:13px;color:#555">320kbps</div>
<svg class="a" style="left:314px;top:681px" width="12" height="9" viewBox="0 0 12 9"><path d="M0.5 0.5h11L6 8.5z" fill="#c7c9e3" stroke="#c7c9e3" stroke-width="1" stroke-linejoin="round"/></svg>
<div class="t" style="left:373px;top:627px;font-size:14px;font-weight:bold;color:#333">采样率</div>
<div class="a" style="left:425px;top:622px;width:182px;height:30px;border:1px solid #e3e6ef;border-radius:5px;background:#fff"></div>
<div class="t" style="left:438px;top:628px;font-size:13px;color:#555">与源音频一致</div>
<svg class="a" style="left:580px;top:633px" width="12" height="9" viewBox="0 0 12 9"><path d="M0.5 0.5h11L6 8.5z" fill="#c7c9e3" stroke="#c7c9e3" stroke-width="1" stroke-linejoin="round"/></svg>
<div class="t" style="left:373px;top:675px;font-size:14px;font-weight:bold;color:#333">声道数</div>
<div class="a" style="left:425px;top:670px;width:182px;height:30px;border:1px solid #e3e6ef;border-radius:5px;background:#fff"></div>
<div class="t" style="left:438px;top:676px;font-size:13px;color:#555">与源音频一致</div>
<svg class="a" style="left:580px;top:681px" width="12" height="9" viewBox="0 0 12 9"><path d="M0.5 0.5h11L6 8.5z" fill="#c7c9e3" stroke="#c7c9e3" stroke-width="1" stroke-linejoin="round"/></svg>
<div class="t" style="left:654px;top:629px;font-size:14px;font-weight:bold;color:#333">音量</div>
<div class="t" style="left:640px;top:675px;font-size:14px;font-weight:bold;color:#333">保存至</div>
<div class="a" style="left:691px;top:670px;width:160px;height:30px;border:1px solid #e3e6ef;border-radius:5px;background:#fff"></div>
<div class="t" style="left:705px;top:676px;font-size:13px;color:#555">简鹿音频格式转换器</div>
<svg class="a" style="left:825px;top:681px" width="12" height="9" viewBox="0 0 12 9"><path d="M0.5 0.5h11L6 8.5z" fill="#c7c9e3" stroke="#c7c9e3" stroke-width="1" stroke-linejoin="round"/></svg>
<div class="a" style="left:696px;top:637px;width:103px;height:4px;border-radius:2px;background:#f2f2f2"></div>
<div class="a" style="left:696px;top:637px;width:52px;height:4px;border-radius:2px;background:#8fcbff"></div>
<div class="a" style="left:741px;top:632px;width:14px;height:14px;border-radius:7px;border:2px solid #8fcbff;background:#fff"></div>
<div class="a" style="left:814px;top:625px;width:60px;height:28px;border:1px solid #dddddd;border-radius:5px;background:#fff"></div>
<div class="a" style="left:851px;top:626px;width:1px;height:26px;background:#e0e0e0"></div>
<div class="a" style="left:852px;top:639px;width:21px;height:1px;background:#e0e0e0"></div>
<div class="t" style="left:826px;top:631px;font-size:13px;color:#555">100</div>
<svg class="a" style="left:858px;top:629px" width="9" height="22" viewBox="0 0 9 22"><path d="M1.5 5.5L4.5 2.5l3 3M1.5 16.5l3 3 3-3" fill="none" stroke="#999" stroke-width="1"/></svg>
<svg class="a" style="left:866px;top:677px" width="18" height="15" viewBox="0 0 18 15"><path d="M0 1.3A1.3 1.3 0 0 1 1.3 0h5.2l1.8 1.8h8.4A1.3 1.3 0 0 1 18 3.1v10.6A1.3 1.3 0 0 1 16.7 15H1.3A1.3 1.3 0 0 1 0 13.7z" fill="#0f9ff5"/><rect x="3" y="5" width="12" height="1.8" fill="#fff"/></svg>
<div class="a" style="left:1046px;top:601px;width:210px;height:68px;border-radius:11px;background:linear-gradient(90deg,#e9f6ff,#cdebfd 50%,#b3e0fc);box-shadow:0 4px 14px rgba(140,200,245,0.25)"></div>
<div class="t" style="left:1111px;top:624px;font-size:20px;line-height:24px;font-weight:bold;color:#129ff4;-webkit-text-stroke:0.3px #129ff4">停止转换</div>

</body></html>
